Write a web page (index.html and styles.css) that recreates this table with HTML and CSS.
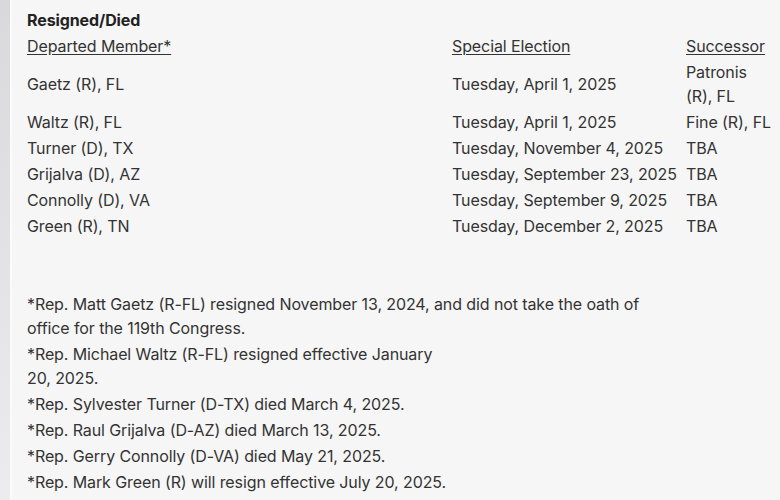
FILE: index.html
```html
<!DOCTYPE html>
<html>
<head>
<meta charset="utf-8">
<link rel="stylesheet" href="styles.css">
</head>
<body>
<div class="page">
  <div class="strip"></div>
  <div class="content">
    <div class="title">Resigned/Died</div>
    <table class="tbl">
      <colgroup>
        <col class="c1"><col class="c2"><col class="c3">
      </colgroup>
      <tr><td><u>Departed Member*</u></td><td><u>Special Election</u></td><td><u>Successor</u></td></tr>
      <tr><td>Gaetz (R), FL</td><td>Tuesday, April 1, 2025</td><td>Patronis (R), FL</td></tr>
      <tr><td>Waltz (R), FL</td><td>Tuesday, April 1, 2025</td><td class="nw">Fine (R), FL</td></tr>
      <tr><td>Turner (D), TX</td><td>Tuesday, November 4, 2025</td><td>TBA</td></tr>
      <tr><td>Grijalva (D), AZ</td><td>Tuesday, September 23, 2025</td><td>TBA</td></tr>
      <tr><td>Connolly (D), VA</td><td>Tuesday, September 9, 2025</td><td>TBA</td></tr>
      <tr><td>Green (R), TN</td><td>Tuesday, December 2, 2025</td><td>TBA</td></tr>
      <tr class="spacer"><td colspan="3"></td></tr>
      <tr><td colspan="2">*Rep. Matt Gaetz (R-FL) resigned November 13, 2024, and did not take the oath of office for the 119th Congress.</td><td></td></tr>
      <tr><td>*Rep. Michael Waltz (R-FL) resigned effective January 20, 2025.</td><td></td><td></td></tr>
      <tr><td colspan="2">*Rep. Sylvester Turner (D-TX) died March 4, 2025.</td><td></td></tr>
      <tr><td colspan="2">*Rep. Raul Grijalva (D-AZ) died March 13, 2025.</td><td></td></tr>
      <tr><td colspan="2">*Rep. Gerry Connolly (D-VA) died May 21, 2025.</td><td></td></tr>
      <tr><td colspan="2">*Rep. Mark Green (R) will resign effective July 20, 2025.</td><td></td></tr>
    </table>
  </div>
</div>
</body>
</html>
```
FILE: styles.css
```css
html, body {
  margin: 0;
  padding: 0;
  background: #f6f6f6;
}
body {
  font-family: Inter, "Noto Sans", sans-serif;
  font-size: 16px;
  letter-spacing: -0.1px;
  color: #333333;
}
.page {
  display: flex;
  min-height: 500px;
}
.strip {
  width: 10px;
  flex: none;
  background: linear-gradient(#d9d9dc, #ececee);
  border-right: 2px solid #fbfbfb;
}
.content {
  flex: 1;
  padding: 8px 0 0 15px;
}
.title {
  font-weight: 700;
  line-height: 24px;
  color: #222222;
  margin-bottom: 1px;
}
.tbl {
  border-collapse: collapse;
  table-layout: fixed;
  width: 745px;
}
.c1 { width: 425px; }
.c2 { width: 234px; }
.c3 { width: 86px; }
.tbl td {
  padding: 1px 0;
  line-height: 24px;
  vertical-align: middle;
}
.tbl td.nw {
  white-space: nowrap;
}
.tbl u {
  text-underline-offset: 2px;
}
.spacer td {
  height: 52px;
  padding: 0;
}
```
